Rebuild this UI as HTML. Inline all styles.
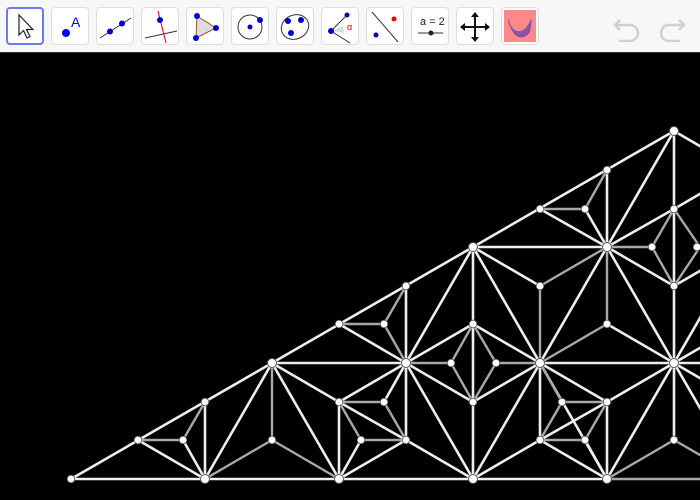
<!DOCTYPE html>
<html><head><meta charset="utf-8"><style>
html,body{margin:0;padding:0;width:700px;height:500px;overflow:hidden;background:#000;font-family:"Liberation Sans",sans-serif}
#tb{position:absolute;left:0;top:0;width:700px;height:52px;background:#f7f7f7;border-bottom:1px solid #333}
.b{position:absolute;top:7px;width:36px;height:36px;border:1px solid #ddd;border-radius:4px;background:#fff}
.b svg{position:absolute;left:0;top:0}
.sel{border:2px solid #6a7cf2;width:34px;height:34px}
#cv{position:absolute;left:0;top:53px}
</style></head><body>
<div id="tb">
<div class="b sel" style="left:6px"><svg width="34" height="34"><path d="M11 6 L11 26 L15.5 21.5 L19 29 L22 27.5 L18.5 20.5 L25 20.5 Z" fill="#fff" stroke="#222" stroke-width="1.2"/></svg></div>
<div class="b" style="left:51px"><svg width="36" height="36"><circle cx="14" cy="25" r="4" fill="#0000ee"/><text x="19" y="19" font-size="14" fill="#0000ee" font-family="Liberation Sans">A</text></svg></div>
<div class="b" style="left:96px"><svg width="36" height="36"><line x1="3" y1="30" x2="34" y2="10" stroke="#333"/><circle cx="13" cy="23.5" r="3" fill="#00c"/><circle cx="25" cy="15.5" r="3" fill="#00c"/></svg></div>
<div class="b" style="left:141px"><svg width="36" height="36"><line x1="3" y1="30" x2="35" y2="23" stroke="#333"/><line x1="16" y1="3" x2="24" y2="35" stroke="#e00"/><circle cx="18" cy="12" r="3" fill="#00c"/></svg></div>
<div class="b" style="left:186px"><svg width="36" height="36"><polygon points="10,8 29,20 9,30" fill="#ddd" stroke="#a0522d"/><circle cx="10" cy="8" r="3" fill="#00c"/><circle cx="29" cy="20" r="3" fill="#00c"/><circle cx="9" cy="30" r="3" fill="#00c"/></svg></div>
<div class="b" style="left:231px"><svg width="36" height="36"><circle cx="18" cy="19" r="12" fill="none" stroke="#333"/><circle cx="18" cy="19" r="2.5" fill="#00c"/><circle cx="28" cy="12" r="3" fill="#00c"/></svg></div>
<div class="b" style="left:276px"><svg width="36" height="36"><ellipse cx="18" cy="19" rx="14" ry="12" transform="rotate(-25 18 19)" fill="none" stroke="#333"/><circle cx="11" cy="13" r="3" fill="#00c"/><circle cx="24" cy="12" r="3" fill="#00c"/><circle cx="14" cy="25" r="3" fill="#00c"/></svg></div>
<div class="b" style="left:321px"><svg width="36" height="36"><polygon points="9,23 21,18 22,25" fill="#ddd"/><line x1="9" y1="23" x2="26" y2="6" stroke="#333"/><line x1="9" y1="23" x2="28" y2="35" stroke="#333"/><circle cx="9" cy="23" r="3" fill="#00c"/><circle cx="25" cy="7" r="2.5" fill="#00c"/><text x="25" y="22" font-size="9" fill="#e00">α</text></svg></div>
<div class="b" style="left:366px"><svg width="36" height="36"><line x1="5" y1="4" x2="31" y2="34" stroke="#333"/><circle cx="27" cy="11" r="2.5" fill="#e00"/><circle cx="9" cy="27" r="2.5" fill="#00c"/></svg></div>
<div class="b" style="left:411px"><svg width="36" height="36"><text x="8" y="17" font-size="11" fill="#222">a = 2</text><line x1="6" y1="25" x2="31" y2="25" stroke="#333"/><circle cx="19" cy="25" r="2.5" fill="#222"/></svg></div>
<div class="b" style="left:456px"><svg width="36" height="36"><path d="M18 7 V31 M6 19 H30" stroke="#111" stroke-width="2"/><path d="M18 4 L14 9 H22Z M18 34 L14 29 H22Z M3 19 L8 15 V23Z M33 19 L28 15 V23Z" fill="#111"/></svg></div>
<div class="b" style="left:501px"><svg width="36" height="36"><rect x="2" y="2" width="32" height="32" fill="#f88"/><path d="M6 11 C8 28 22 32 30 12 L28 24 C22 33 10 32 6 11Z" fill="#8a4fa3"/><path d="M7 12 C10 26 22 28 29 11 L30 12 C22 32 8 28 6 11Z" fill="#7d5ca8"/></svg></div>
<svg style="position:absolute;left:612px;top:12px" width="75" height="30"><path d="M8 8 L3 13 L8 18 M3 13 H18 A8 8 0 0 1 18 29 H7" fill="none" stroke="#d0d0d0" stroke-width="2.5"/><path d="M67 8 L72 13 L67 18 M72 13 H57 A8 8 0 0 0 57 29 H68" fill="none" stroke="#d0d0d0" stroke-width="2.5"/></svg>
</div>
<svg id="cv" width="700" height="447" viewBox="0 53 700 447">
<rect x="0" y="53" width="700" height="447" fill="#000"/>
<g stroke="#eee" stroke-width="2.6" stroke-linecap="round">
<line x1="71" y1="479" x2="674" y2="131"/>
<line x1="71" y1="479" x2="607" y2="479"/>
<line x1="138" y1="440" x2="205" y2="479"/><line x1="183" y1="440" x2="205" y2="479"/>
<line x1="205" y1="402" x2="205" y2="479"/><line x1="205" y1="479" x2="272" y2="363"/>
<line x1="272" y1="363" x2="339" y2="479"/><line x1="272" y1="363" x2="339" y2="402"/>
<line x1="272" y1="363" x2="406" y2="363"/><line x1="339" y1="324" x2="406" y2="363"/>
<line x1="406" y1="363" x2="473" y2="402"/><line x1="473" y1="247" x2="473" y2="479"/>
<line x1="406" y1="363" x2="339" y2="402"/><line x1="406" y1="363" x2="384" y2="402"/>
<line x1="406" y1="286" x2="406" y2="440"/><line x1="339" y1="402" x2="406" y2="440"/>
<line x1="339" y1="402" x2="339" y2="479"/><line x1="361" y1="440" x2="339" y2="479"/>
<line x1="406" y1="440" x2="339" y2="479"/><line x1="406" y1="440" x2="473" y2="479"/>
<line x1="406" y1="363" x2="473" y2="479"/><line x1="406" y1="363" x2="473" y2="247"/>
<line x1="406" y1="363" x2="473" y2="324"/>
<line x1="473" y1="247" x2="607" y2="247"/><line x1="473" y1="247" x2="540" y2="363"/>
<line x1="473" y1="247" x2="540" y2="286"/>
<line x1="607" y1="247" x2="540" y2="363"/><line x1="607" y1="247" x2="674" y2="286"/>
<line x1="607" y1="247" x2="674" y2="363"/><line x1="674" y1="209" x2="674" y2="440"/>
<line x1="607" y1="324" x2="674" y2="363"/>
<line x1="473" y1="324" x2="540" y2="363"/>
<line x1="540" y1="363" x2="700" y2="363"/>
<line x1="540" y1="363" x2="473" y2="402"/><line x1="540" y1="363" x2="473" y2="479"/>
<line x1="540" y1="363" x2="540" y2="440"/><line x1="540" y1="363" x2="607" y2="402"/>
<line x1="540" y1="363" x2="607" y2="479"/>
<line x1="607" y1="402" x2="674" y2="363"/><line x1="607" y1="402" x2="540" y2="440"/>
<line x1="607" y1="402" x2="607" y2="479"/><line x1="585" y1="440" x2="607" y2="479"/>
<line x1="540" y1="440" x2="473" y2="479"/><line x1="540" y1="440" x2="607" y2="479"/>
<line x1="674" y1="363" x2="607" y2="479"/>
<line x1="607" y1="170" x2="607" y2="247"/><line x1="540" y1="209" x2="607" y2="247"/>
<line x1="585" y1="209" x2="607" y2="247"/><line x1="674" y1="131" x2="607" y2="247"/>
<line x1="674" y1="131" x2="674" y2="209"/><line x1="674" y1="209" x2="607" y2="247"/>
<line x1="674" y1="131" x2="741" y2="170"/><line x1="674" y1="209" x2="741" y2="170"/>
<line x1="674" y1="286" x2="741" y2="247"/>
<line x1="674" y1="363" x2="741" y2="324"/><line x1="674" y1="363" x2="741" y2="402"/>
<line x1="674" y1="363" x2="741" y2="247"/><line x1="674" y1="363" x2="741" y2="479"/>
</g>
<g stroke="#a8a8a8" stroke-width="2.4" stroke-linecap="round">
<line x1="138" y1="440" x2="183" y2="440"/><line x1="183" y1="440" x2="205" y2="402"/>
<line x1="272" y1="363" x2="272" y2="440"/><line x1="205" y1="479" x2="272" y2="440"/>
<line x1="272" y1="440" x2="339" y2="479"/><line x1="339" y1="324" x2="384" y2="324"/>
<line x1="384" y1="324" x2="406" y2="363"/><line x1="406" y1="286" x2="384" y2="324"/>
<line x1="406" y1="363" x2="451" y2="363"/><line x1="451" y1="363" x2="473" y2="402"/>
<line x1="496" y1="363" x2="473" y2="402"/><line x1="496" y1="363" x2="540" y2="363"/>
<line x1="473" y1="324" x2="451" y2="363"/><line x1="473" y1="324" x2="496" y2="363"/>
<line x1="339" y1="402" x2="384" y2="402"/><line x1="384" y1="402" x2="406" y2="440"/>
<line x1="339" y1="402" x2="361" y2="440"/><line x1="361" y1="440" x2="406" y2="440"/>
<line x1="607" y1="247" x2="652" y2="247"/><line x1="540" y1="286" x2="607" y2="247"/>
<line x1="540" y1="286" x2="540" y2="363"/><line x1="607" y1="247" x2="607" y2="324"/>
<line x1="652" y1="247" x2="674" y2="286"/><line x1="674" y1="286" x2="700" y2="247"/>
<line x1="607" y1="324" x2="540" y2="363"/>
<line x1="540" y1="363" x2="562" y2="402"/><line x1="607" y1="402" x2="562" y2="402"/>
<line x1="607" y1="402" x2="585" y2="440"/><line x1="562" y1="402" x2="540" y2="440"/>
<line x1="540" y1="440" x2="585" y2="440"/>
<line x1="674" y1="440" x2="607" y2="479"/><line x1="674" y1="440" x2="700" y2="455"/>
<line x1="607" y1="479" x2="700" y2="479"/>
<line x1="607" y1="170" x2="585" y2="209"/><line x1="540" y1="209" x2="585" y2="209"/>
<line x1="674" y1="209" x2="652" y2="247"/><line x1="674" y1="209" x2="700" y2="247"/>
</g>
<g fill="#fff" stroke="#555" stroke-width="1">
<circle cx="205" cy="479" r="4.5"/><circle cx="339" cy="479" r="4.5"/><circle cx="473" cy="479" r="4.5"/><circle cx="607" cy="479" r="4.5"/>
<circle cx="272" cy="363" r="4.5"/><circle cx="406" cy="363" r="4.5"/><circle cx="540" cy="363" r="4.5"/><circle cx="674" cy="363" r="4.5"/>
<circle cx="473" cy="247" r="4.5"/><circle cx="607" cy="247" r="4.5"/><circle cx="674" cy="131" r="4.5"/>
</g>
<g fill="#fff" stroke="#555" stroke-width="0.8">
<circle cx="71" cy="479" r="3.8"/><circle cx="138" cy="440" r="3.8"/><circle cx="183" cy="440" r="3.8"/><circle cx="205" cy="402" r="3.8"/>
<circle cx="272" cy="440" r="3.8"/><circle cx="339" cy="402" r="3.8"/><circle cx="384" cy="402" r="3.8"/><circle cx="361" cy="440" r="3.8"/>
<circle cx="406" cy="440" r="3.8"/><circle cx="339" cy="324" r="3.8"/><circle cx="384" cy="324" r="3.8"/><circle cx="406" cy="286" r="3.8"/>
<circle cx="451" cy="363" r="3.8"/><circle cx="496" cy="363" r="3.8"/><circle cx="473" cy="324" r="3.8"/><circle cx="473" cy="402" r="3.8"/>
<circle cx="540" cy="286" r="3.8"/><circle cx="607" cy="324" r="3.8"/><circle cx="540" cy="209" r="3.8"/><circle cx="585" cy="209" r="3.8"/>
<circle cx="607" cy="170" r="3.8"/><circle cx="652" cy="247" r="3.8"/><circle cx="674" cy="209" r="3.8"/><circle cx="697" cy="247" r="3.8"/>
<circle cx="674" cy="286" r="3.8"/><circle cx="540" cy="440" r="3.8"/><circle cx="585" cy="440" r="3.8"/><circle cx="562" cy="402" r="3.8"/>
<circle cx="607" cy="402" r="3.8"/><circle cx="674" cy="440" r="3.8"/>
</g>
</svg>
</body></html>
